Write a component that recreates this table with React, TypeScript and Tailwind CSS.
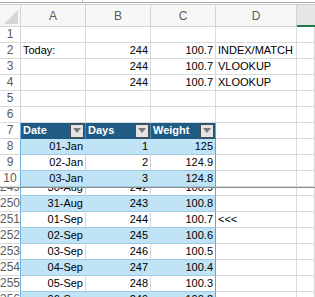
import type { ReactNode } from "react";

const grid = "grid grid-cols-[21px_65px_65px_65px_81px_1fr]";

interface TableRow {
  n: number;
  date: string;
  days: string;
  weight: string;
  note?: string;
}

const topRows: TableRow[] = [
  { n: 8, date: "01-Jan", days: "1", weight: "125" },
  { n: 9, date: "02-Jan", days: "2", weight: "124.9" },
  { n: 10, date: "03-Jan", days: "3", weight: "124.8" },
];

const bottomRows: TableRow[] = [
  { n: 250, date: "31-Aug", days: "243", weight: "100.8" },
  { n: 251, date: "01-Sep", days: "244", weight: "100.7", note: "<<<" },
  { n: 252, date: "02-Sep", days: "245", weight: "100.6" },
  { n: 253, date: "03-Sep", days: "246", weight: "100.5" },
  { n: 254, date: "04-Sep", days: "247", weight: "100.4" },
  { n: 255, date: "05-Sep", days: "248", weight: "100.3" },
  { n: 256, date: "06-Sep", days: "249", weight: "100.2" },
];

function RowNum({ n, table }: { n: number; table?: boolean }) {
  return (
    <div
      className={`h-4 overflow-hidden whitespace-nowrap flex justify-center border-b border-r border-b-[#d9d9d9] text-[12px] leading-[15px] text-[#5c5c5c] ${
        table ? "border-r-[#6fb0dc]" : "border-r-[#d4d4d4]"
      }`}
    >
      {n}
    </div>
  );
}

function Cell({ children, right }: { children?: ReactNode; right?: boolean }) {
  return (
    <div
      className={`h-4 px-[2px] overflow-visible whitespace-nowrap border-b border-r border-[#dadada] text-[11px] leading-[15px] text-black ${
        right ? "text-right" : "text-left"
      }`}
    >
      {children}
    </div>
  );
}

function Filter() {
  return (
    <div className="w-[14px] h-[14px] border border-[#4a4a4a] bg-[#e4e4e4] flex items-center justify-center shrink-0">
      <svg width="8" height="5" viewBox="0 0 8 5">
        <path d="M0 0 L8 0 L4 5 Z" fill="#7a7a7a" />
      </svg>
    </div>
  );
}

function DataRow({ row }: { row: TableRow }) {
  const band = row.n % 2 === 0;
  const bg = band ? "bg-[#c0e4f6]" : "bg-white";
  const inner = band ? "border-r-[#c0e4f6]" : "border-r-[#d4d4d4]";
  const cls = `h-4 px-[2px] text-right whitespace-nowrap border-b border-r border-b-[#9ccbe8] text-[11px] leading-[15px] text-black ${bg}`;
  return (
    <div className={grid}>
      <RowNum n={row.n} table />
      <div className={`${cls} ${inner}`}>{row.date}</div>
      <div className={`${cls} ${inner}`}>{row.days}</div>
      <div className={`${cls} border-r-[#5fa6d8]`}>{row.weight}</div>
      <Cell>{row.note}</Cell>
      <Cell />
    </div>
  );
}

function PlainRow({ n, a, b, c, d }: { n: number; a?: string; b?: string; c?: string; d?: string }) {
  return (
    <div className={grid}>
      <RowNum n={n} />
      <Cell>{a}</Cell>
      <Cell right>{b}</Cell>
      <Cell right>{c}</Cell>
      <Cell>{d}</Cell>
      <Cell />
    </div>
  );
}

export default function App() {
  const head = "h-4 pl-[2px] pr-px flex items-center justify-between border-b border-r border-b-[#1f5b85] border-r-[#4f87ad] bg-[#1f5b85] text-white font-bold text-[11px] leading-[15px]";

  return (
    <div className="w-[315px] h-[297px] overflow-hidden bg-white font-['Liberation_Sans',Arial,sans-serif]">
      {/* formula bar edge */}
      <div className="relative h-[2px]">
        <div className="absolute left-[82px] top-0 w-px h-[2px] bg-[#b5b5b5]" />
      </div>
      <div className="h-px bg-[#a9a9a9]" />
      <div className="h-px bg-white" />
      <div className="h-px bg-[#cfcfcf]" />

      {/* column headers */}
      <div className={`${grid} h-[22px]`}>
        <div className="relative border-r border-b border-[#d4d4d4] bg-[#f7f7f7]">
          <svg className="absolute right-[2px] bottom-[2px]" width="14" height="14" viewBox="0 0 14 14">
            <path d="M14 0 L14 14 L0 14 Z" fill="#d6d6d6" />
          </svg>
        </div>
        {["A", "B", "C", "D"].map((l) => (
          <div
            key={l}
            className="flex items-center justify-center border-r border-b border-[#d4d4d4] bg-[#f7f7f7] text-[12px] text-[#5c5c5c]"
          >
            {l}
          </div>
        ))}
        <div className="bg-[#e6e6e6] border-b-2 border-[#1f7a45]" />
      </div>

      <PlainRow n={1} />
      <PlainRow n={2} a="Today:" b="244" c="100.7" d="INDEX/MATCH" />
      <PlainRow n={3} b="244" c="100.7" d="VLOOKUP" />
      <PlainRow n={4} b="244" c="100.7" d="XLOOKUP" />
      <PlainRow n={5} />
      <PlainRow n={6} />

      {/* table header */}
      <div className={grid}>
        <RowNum n={7} table />
        <div className={head}>
          <span>Date</span>
          <Filter />
        </div>
        <div className={head}>
          <span>Days</span>
          <Filter />
        </div>
        <div className={`${head} border-r-[#5fa6d8]`}>
          <span>Weight</span>
          <Filter />
        </div>
        <Cell />
        <Cell />
      </div>

      {topRows.map((r) => (
        <DataRow key={r.n} row={r} />
      ))}

      {/* frozen split */}
      <div className="h-px bg-[#8c8c8c]" />

      <div className="h-2 overflow-hidden flex flex-col justify-end">
        <DataRow row={{ n: 249, date: "30-Aug", days: "242", weight: "100.9" }} />
      </div>

      {bottomRows.map((r) => (
        <DataRow key={r.n} row={r} />
      ))}
    </div>
  );
}
